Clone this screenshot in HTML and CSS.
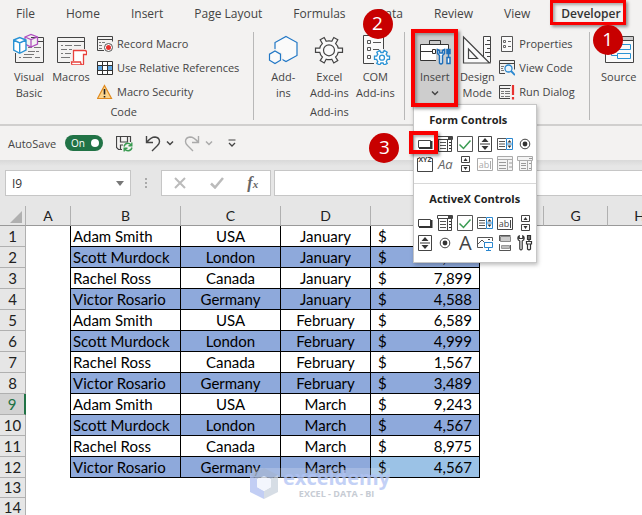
FILE: index.html
```
<!DOCTYPE html>
<html lang="en">
<head>
    <meta charset="UTF-8">
    <meta name="viewport" content="width=device-width, initial-scale=1.0">
    <title>Spreadsheet - Developer tab</title>
    <link rel="stylesheet" href="styles.css">
</head>
<body>
    <!-- icons used in both control lists -->
    <svg class="sprite" aria-hidden="true">
        <symbol id="i-button" viewBox="0 0 16 16"><path d="M1.5 4.5h12v7h-12z" fill="#fff" stroke="#444"/><path d="M2 12h12.500V5" fill="none" stroke="#333" stroke-width="2"/></symbol>
        <symbol id="i-combo" viewBox="0 0 16 16"><path d="M.5 .5h15v3H.5zM1.500 3.500v12h13v-12M10.500 4v11" fill="#fff" stroke="#444"/><path d="M11 1h4v2h-4z" fill="#444"/><path d="M3 6.500h6M3 9.500h6M3 12.500h6" stroke="#555"/><path d="M12 6h2v1h-2zM12 9h2v1h-2zM12 12h2v1h-2z" fill="#333"/></symbol>
        <symbol id="i-check" viewBox="0 0 16 16"><path d="M.5 .5h15v15H.5z" fill="#fff" stroke="#555"/><path d="M2.500 8.500l4 4 7-8" fill="none" stroke="#3a9b52" stroke-width="1.500"/></symbol>
        <symbol id="i-spin" viewBox="0 0 16 16"><path d="M1.500 .5h13v15h-13z" fill="#fff" stroke="#444"/><path d="M3 8h10" stroke="#333"/><path d="M8 2l3.500 4h-7zM8 14l3.500-4h-7z" fill="#333"/></symbol>
        <symbol id="i-list" viewBox="0 0 16 16"><path d="M9 2.500H.5v11H9" fill="#fff" stroke="#555"/><path d="M2 5.500h6M2 8h6M2 10.500h6" stroke="#555"/><path d="M9.500 2.500h6v11h-6zM9.500 8h6" fill="#fff" stroke="#2a87cf"/><path d="M12.500 4l2 2.500h-4zM12.500 12l2-2.500h-4z" fill="#333"/></symbol>
        <symbol id="i-radio" viewBox="0 0 16 16"><circle cx="8" cy="8" r="4.800" fill="#fff" stroke="#444"/><circle cx="8" cy="8" r="2.400" fill="#333"/></symbol>
        <symbol id="i-scroll" viewBox="0 0 16 16"><path d="M4.500 .5h8v6h-8zM4.500 9.500h8v6h-8z" fill="#fff" stroke="#444"/><path d="M8.500 2l2 3h-4zM8.500 14l2-3h-4z" fill="#333"/></symbol>
        <symbol id="i-listbox" viewBox="0 0 16 16"><path d="M.5 .5h15v14H.5zM.5 3.500h15M10.500 4v10" fill="#f4f4f4" stroke="#aaa"/><path d="M2 6.500h7M2 9.500h7M2 12.500h7M12 7h3M12 11h3" stroke="#999"/></symbol>
        <symbol id="i-dropbox" viewBox="0 0 16 16"><path d="M.5 .5h15v4H.5zM2.500 4.500v10h12v-10M10.500 5v10" fill="#f4f4f4" stroke="#aaa"/><path d="M4 7.500h5M4 9.500h5M4 12.500h5M12 7.500h2M12 12.500h2M12 2.500h3" stroke="#999"/></symbol>
        <symbol id="i-image" viewBox="0 0 16 16"><path d="M6 12.500H.5v-10h15V6" fill="none" stroke="#555"/><path d="M1 9l4-4 3 3" fill="none" stroke="#555"/><path d="M11 4h2v1h-2z" fill="#444"/><path d="M7.500 7.500h8v5h-8zM11.500 13v2M9 15.500h5" fill="#fff" stroke="#2a87cf"/></symbol>
        <symbol id="i-toggle" viewBox="0 0 16 16"><path d="M3.500 1.500h10v5h-10z" fill="#ccc" stroke="#888"/><path d="M2.500 6V.5h11M2.500 9v6.500h11V10" fill="none" stroke="#555"/><path d="M4.500 10.500h8v3h-8z" fill="#bbb" stroke="#999"/></symbol>
        <symbol id="i-tools" viewBox="0 0 16 16"><path d="M2.200 .8Q.8 1.500 .8 3.200q0 1.800 2 2.800v8q1.200 1.800 2.400 0V6q2-1 2-2.800 0-1.700-1.400-2.400v2.700H2.200zM12 .5v6M10.500 .5h3v4h-3zM9.500 6.500h5v2.500h-5zM10.500 9v5q1.500 1.800 3 0V9z" fill="#fff" stroke="#333" stroke-width="1.200"/></symbol>
        <symbol id="i-chevron" viewBox="0 0 8 8"><path d="M1 2.500l3 3 3-3" fill="none" stroke="currentColor" stroke-width="1.500"/></symbol>
    </svg>

    <div class="app">
        <nav class="tabs">
            <a href="#">File</a>
            <a href="#">Home</a>
            <a href="#">Insert</a>
            <a href="#">Page Layout</a>
            <a href="#">Formulas</a>
            <a href="#" class="marked">Data<span class="step step-2">2</span></a>
            <a href="#">Review</a>
            <a href="#">View</a>
            <a href="#" class="marked active">Developer<span class="frame frame-tab"></span><span class="step step-1">1</span></a>
        </nav>

        <section class="ribbon">
            <div class="group">
                <div class="tools">
                    <button class="big">
                        <svg width="32" height="32" viewBox="0 0 32 32" fill="none"><path d="M18 4.500h12.500v25H2.500V20" stroke="#444"/><path d="M24 8.500h6" stroke="#444"/><path d="M15 14.500h4M21 14.500h7M15 18.500h7M23 18.500h3M6 24.500h2M10 24.500h9M22 24.500h5M11 21.500h10" stroke="#777"/><path d="M12 4l6-2.500L24.500 4v7l-6.500 3-6-3zM12 4l6 2.500L24.500 4M18 6.500V14" stroke="#b04fc0" stroke-width="1.300"/><path d="M.7 7l6-2.500L13 7v10l-6.300 3.300L.7 17z" fill="#fff"/><path d="M.7 7l6-2.500L13 7v10l-6.300 3.300L.7 17zM.7 7l6 3L13 7M6.700 10v10" stroke="#2a93d5" stroke-width="1.400"/></svg>
                        <span>Visual<br>Basic</span>
                    </button>
                    <button class="big">
                        <svg width="32" height="32" viewBox="0 0 32 32" fill="none"><path d="M15 29.500H2.500v-25h27V16M2.500 8.500h27" stroke="#444"/><path d="M6 12.500h2M10 12.500h7M19 12.500h7M6 16.500h6M14 16.500h3M6 20.500h2M10 20.500h6M6 24.500h9" stroke="#777"/><path d="M18.500 28V17.500h11.500q2 0 1.500 4h-3V31q0 1-2 1H17.500q-1 0-1-3h9q0 2 1.500 2.500" fill="#fff" stroke="#e8413c" stroke-width="1.300"/></svg>
                        <span>Macros</span>
                    </button>
                    <div class="stack">
                        <button class="small"><svg width="16" height="16" viewBox="0 0 16 16" fill="none"><path d="M7 14.500H.5V.5h15v5M.5 3.500h15" stroke="#444"/><path d="M2 6.500h2M5 6.500h3M2 9.500h3M2 12.500h3" stroke="#777"/><circle cx="11.500" cy="11.500" r="4" fill="#fff" stroke="#555"/><circle cx="11.500" cy="11.500" r="2.500" fill="#e8322f"/></svg>Record Macro</button>
                        <button class="small"><svg width="16" height="16" viewBox="0 0 16 16" fill="none"><path d="M.5 1.500h15v13H.5z" fill="#fff"/><path d="M1 5h4v5H1zM11 5h4v5h-4z" fill="#62a9e4"/><path d="M.5 1.500h15v13H.5zM5.500 1v13M10.500 1v13M.5 5.500h15M.5 10.500h15" stroke="#333"/></svg>Use Relative References</button>
                        <button class="small"><svg width="16" height="16" viewBox="0 0 16 16"><path d="M7.500 1.500l7 13H.5z" fill="#fbd48a" stroke="#e08a1e" stroke-width="1.200"/><path d="M7.500 5v5.500M7.500 12v1.500" stroke="#222" stroke-width="1.600"/></svg>Macro Security</button>
                    </div>
                </div>
                <div class="group-name">Code</div>
            </div>

            <div class="group addins">
                <div class="tools">
                    <button class="big">
                        <svg width="32" height="32" viewBox="0 0 32 32" fill="none"><path d="M19 3.500l11 6v13l-11 6-11-6v-13z" fill="#fafafa" stroke="#2177c5" stroke-width="1.200"/><path d="M8 17.500l6 3.500v6.500l-6 3.500-6-3.500V21z" fill="#fafafa" stroke="#f3f2f1" stroke-width="3"/><path d="M8 18l5.500 3.200v6L8 30.500l-5.500-3.300v-6z" fill="#fafafa" stroke="#2177c5" stroke-width="1.200"/></svg>
                        <span>Add-<br>ins</span>
                    </button>
                    <button class="big">
                        <svg width="32" height="32" viewBox="0 0 32 32" fill="none" stroke="#444" stroke-width="1.200"><path d="M11.200 4.500l2 3.800q2.800-1 5.600 0l2-3.800 4 2.300-2.200 3.800q2.200 2 2.600 4.600h4.300v4.200h-4.300q-.4 2.600-2.600 4.600l2.200 3.600-4 2.400-2-3.800q-2.800 1-5.600 0l-2 3.800-4-2.400L9.400 24q-2.200-2-2.600-4.600H2.500v-4.200h4.300q.4-2.600 2.600-4.600L7.200 6.800z" fill="#fafafa"/><circle cx="16" cy="17.300" r="5.500"/></svg>
                        <span>Excel<br>Add-ins</span>
                    </button>
                    <button class="big">
                        <svg width="32" height="32" viewBox="0 0 32 32" fill="none"><path d="M15 30.500H4.500v-28h20V16" fill="#fafafa" stroke="#444"/><path d="M8.500 7.500h3v3h-3zM8.500 14.500h3v3h-3zM8.500 22.500h3v3h-3zM14 9.500h8M14 16.500h6" stroke="#555"/><g stroke="#2a93d5" stroke-width="1.300"><path d="M20.800 17.500l1.100 2h2.200l1.100-2 3 1.700-1 2q.8.9 1.100 2h2.200v3.200h-2.200q-.3 1.100-1.100 2l1 2-3 1.600-1.100-2h-2.200l-1.100 2-3-1.600 1-2q-.8-.9-1.100-2h-2.200v-3.200h2.200q.3-1.100 1.100-2l-1-2z" fill="#fff"/><circle cx="23" cy="24.700" r="2.500"/></g></svg>
                        <span>COM<br>Add-ins</span>
                    </button>
                </div>
                <div class="group-name">Add-ins</div>
            </div>

            <div class="group controls">
                <div class="tools">
                    <div class="dropdown">
                        <button class="big open">
                            <svg width="32" height="32" viewBox="0 0 32 32" fill="none"><path d="M10.500 11V7.500h11V11" stroke="#333"/><path d="M1.500 11.500h28v16h-28z" fill="#fff" stroke="#333"/><path d="M1.500 18.500h28" stroke="#333"/><path d="M13.500 16.500h3v4h-3z" fill="#fff" stroke="#333"/><path d="M17 16h15v17H17z" fill="#cdcdcd"/><path d="M18.500 16.500v4l2 2V30q1.500 2 3 0v-7.500l2-2v-4l-2 1V20h-3v-2.500zM29.500 16v8M28 24.500h3v6h-3zM28 16.500h3v4h-3z" fill="#fff" stroke="#1e6fba" stroke-width="1.500"/></svg>
                            <span>Insert</span>
                            <svg class="chevron" width="8" height="8"><use href="#i-chevron"/></svg>
                        </button>
                        <div class="menu">
                            <section>
                                <h2>Form Controls</h2>
                                <div class="menu-grid">
                                    <button class="marked" aria-label="Button"><svg><use href="#i-button"/></svg><span class="frame frame-item"></span><span class="step step-3">3</span></button>
                                    <button aria-label="Combo Box"><svg><use href="#i-combo"/></svg></button>
                                    <button aria-label="Check Box"><svg><use href="#i-check"/></svg></button>
                                    <button aria-label="Spin Button"><svg><use href="#i-spin"/></svg></button>
                                    <button aria-label="List Box"><svg><use href="#i-list"/></svg></button>
                                    <button aria-label="Option Button"><svg><use href="#i-radio"/></svg></button>
                                    <button aria-label="Group Box"><svg viewBox="0 0 16 16"><path d="M2 2.500H.5v13h15v-13H14" fill="none" stroke="#444"/><text x="8" y="6" class="icon-xyz">XYZ</text></svg></button>
                                    <button class="label">Aa</button>
                                    <button aria-label="Scroll Bar"><svg><use href="#i-scroll"/></svg></button>
                                    <button class="off" aria-label="Text Field"><svg viewBox="0 0 16 16"><path d="M.5 2.500h15v12H.5z" fill="#fff" stroke="currentColor"/><text x="7" y="12" class="icon-ab">ab</text><path d="M13.500 5v8" stroke="currentColor"/></svg></button>
                                    <button class="off" aria-label="Combo List"><svg><use href="#i-listbox"/></svg></button>
                                    <button class="off" aria-label="Combo Drop-Down"><svg><use href="#i-dropbox"/></svg></button>
                                </div>
                            </section>
                            <section>
                                <h2>ActiveX Controls</h2>
                                <div class="menu-grid">
                                    <button aria-label="Command Button"><svg><use href="#i-button"/></svg></button>
                                    <button aria-label="Combo Box"><svg><use href="#i-combo"/></svg></button>
                                    <button aria-label="Check Box"><svg><use href="#i-check"/></svg></button>
                                    <button aria-label="List Box"><svg><use href="#i-list"/></svg></button>
                                    <button aria-label="Text Box"><svg viewBox="0 0 16 16"><path d="M.5 2.500h15v12H.5z" fill="#fff" stroke="currentColor"/><text x="7" y="12" class="icon-ab">ab</text><path d="M13.500 5v8" stroke="currentColor"/></svg></button>
                                    <button aria-label="Scroll Bar"><svg><use href="#i-scroll"/></svg></button>
                                    <button aria-label="Spin Button"><svg><use href="#i-spin"/></svg></button>
                                    <button aria-label="Option Button"><svg><use href="#i-radio"/></svg></button>
                                    <button class="letter">A</button>
                                    <button aria-label="Image"><svg><use href="#i-image"/></svg></button>
                                    <button aria-label="Toggle Button"><svg><use href="#i-toggle"/></svg></button>
                                    <button aria-label="More Controls"><svg><use href="#i-tools"/></svg></button>
                                </div>
                            </section>
                        </div>
                        <span class="frame frame-insert"></span>
                    </div>
                    <button class="big">
                        <svg width="32" height="32" viewBox="0 0 32 32" fill="none"><path d="M22.500 3.500h7v26h-7z" fill="#fafafa" stroke="#444"/><path d="M26 7.500h3M24 11.500h5M26 15.500h3M24 19.500h5M26 23.500h3" stroke="#444"/><path d="M2.500 4v26h26z" fill="#fafafa" stroke="#444" stroke-width="1.200"/><path d="M7.500 16v9.500h9z" stroke="#444" stroke-width="1.200"/></svg>
                        <span>Design<br>Mode</span>
                    </button>
                    <div class="stack">
                        <button class="small"><svg width="16" height="16" viewBox="0 0 16 16" fill="none"><path d="M2.500 .5h11v15h-11z" fill="#fafafa" stroke="#555"/><path d="M4.500 4.500h2v2h-2zM4.500 9.500h2v2h-2zM9 5.500h3M9 10.500h3" stroke="#666"/></svg>Properties</button>
                        <button class="small"><svg width="16" height="16" viewBox="0 0 16 16" fill="none"><path d="M6 13.500H.5V.5h15v9M.5 3.500h15" stroke="#444"/><path d="M2 6.500h3M2 8.500h2M2 10.500h3" stroke="#777"/><circle cx="9.500" cy="8.500" r="3.500" fill="#e9f4fc" stroke="#2a87cf" stroke-width="1.300"/><path d="M12 11l4 4" stroke="#2a87cf" stroke-width="1.800"/></svg>View Code</button>
                        <button class="small"><svg width="16" height="16" viewBox="0 0 16 16" fill="none"><path d="M11 14.500H.5V1.500H12M.5 4.500H11" stroke="#444"/><path d="M2 7.500h3M6 7.500h5M2 9.500h3M6 9.500h5M2 12.500h3M6 12.500h5" stroke="#777"/><path d="M14 1v10M14 13v2.500" stroke="#e8322f" stroke-width="2.200"/></svg>Run Dialog</button>
                    </div>
                </div>
            </div>

            <div class="group">
                <div class="tools">
                    <button class="big">
                        <svg width="32" height="32" viewBox="0 0 32 32" fill="none"><path d="M2.500 3.500h28v26h-28z" fill="#fafafa" stroke="#444"/><path d="M3 4h27v3H3z" fill="#ccc"/><path d="M2.500 7.500h28" stroke="#444"/><path d="M14.500 11.500h13v5h-13zM14.500 20.500h13v5h-13zM5 13.500h9M8.500 13.500v9h6" stroke="#2a93d5"/></svg>
                        <span>Source</span>
                    </button>
                </div>
            </div>
        </section>

        <div class="quick">
            <label for="autosave">AutoSave</label>
            <span class="toggle"><input type="checkbox" id="autosave" checked><span>On</span></span>
            <button class="save" aria-label="Save"><svg width="17" height="17" viewBox="0 0 17 17" fill="none"><path d="M6 14.500H2.500l-2-2V1.500h14V7M4.500 2v5h7V2M4.500 14v-4H7" stroke="#444" stroke-width="1.200"/><path d="M8 11.500q1-3.500 4-3.300 2 0 3.500 2.300M15.800 7.500v3.300h-3.300M16 12.500q-1 3.500-4 3.300-2 0-3.500-2.300M8.200 16.500v-3.300h3.300" stroke="#3a9b52" stroke-width="1.400"/></svg></button>
            <button class="undo" aria-label="Undo"><svg width="16" height="17" viewBox="0 0 16 17" fill="none"><path d="M1.500 1v6.500H8M1.500 7.500Q6 2 10 2q4.500 .5 4.500 4.500 0 2-2 4L7 16" stroke="#444" stroke-width="1.400"/></svg><svg class="chevron" width="8" height="8"><use href="#i-chevron"/></svg></button>
            <button class="redo" aria-label="Redo"><svg width="16" height="17" viewBox="0 0 16 17" fill="none"><path d="M14.500 1v6.500H8M14.500 7.500Q10 2 6 2 1.500 2.500 1.500 6.500q0 2 2 4L9 16" stroke="#aaa" stroke-width="1.400"/></svg><svg class="chevron" width="8" height="8"><use href="#i-chevron"/></svg></button>
            <button aria-label="Customize"><svg width="8" height="8" viewBox="0 0 8 8"><path d="M.5 1h7" stroke="#444"/><path d="M1 4l3 3 3-3" fill="none" stroke="#444" stroke-width="1.300"/></svg></button>
        </div>

        <div class="formula-bar">
            <div class="name-box"><input type="text" value="I9" aria-label="Name box"><svg width="8" height="5" viewBox="0 0 8 5"><path d="M0 0h8L4 5z" fill="#777"/></svg></div>
            <svg class="dots" width="2" height="12" viewBox="0 0 2 12"><path d="M0 1h2v2H0zM0 5h2v2H0zM0 9h2v2H0z" fill="#aaa"/></svg>
            <div class="formula-buttons">
                <button aria-label="Cancel"><svg width="12" height="12" viewBox="0 0 12 12"><path d="M1 1l10 10M11 1L1 11" stroke="#bbb" stroke-width="2"/></svg></button>
                <button aria-label="Enter"><svg width="14" height="12" viewBox="0 0 14 12"><path d="M1 6.500l4 4L13 1" fill="none" stroke="#bbb" stroke-width="2.500"/></svg></button>
                <button class="fx">f<small>x</small></button>
            </div>
            <input type="text" class="formula" aria-label="Formula">
        </div>

        <main class="sheet">
            <table>
                <colgroup><col class="c-num"><col class="c-a"><col class="c-b"><col class="c-c"><col class="c-d"><col class="c-e"><col class="c-f"><col class="c-f"><col class="c-f"></colgroup>
                <thead>
                    <tr><th><svg width="12" height="12" viewBox="0 0 12 12"><path d="M12 0v12H0z" fill="#b0b0b0"/></svg></th><th>A</th><th>B</th><th>C</th><th>D</th><th>E</th><th>F</th><th>G</th><th>H</th></tr>
                </thead>
                <tbody class="data">
                    <tr><th>1</th><td></td><td>Adam Smith</td><td>USA</td><td>January</td><td><div>$ <span>5,436</span></div></td></tr>
                    <tr><th>2</th><td></td><td>Scott Murdock</td><td>London</td><td>January</td><td><div>$ <span>6,754</span></div></td></tr>
                    <tr><th>3</th><td></td><td>Rachel Ross</td><td>Canada</td><td>January</td><td><div>$ <span>7,899</span></div></td></tr>
                    <tr><th>4</th><td></td><td>Victor Rosario</td><td>Germany</td><td>January</td><td><div>$ <span>4,588</span></div></td></tr>
                    <tr><th>5</th><td></td><td>Adam Smith</td><td>USA</td><td>February</td><td><div>$ <span>6,589</span></div></td></tr>
                    <tr><th>6</th><td></td><td>Scott Murdock</td><td>London</td><td>February</td><td><div>$ <span>4,999</span></div></td></tr>
                    <tr><th>7</th><td></td><td>Rachel Ross</td><td>Canada</td><td>February</td><td><div>$ <span>1,567</span></div></td></tr>
                    <tr><th>8</th><td></td><td>Victor Rosario</td><td>Germany</td><td>February</td><td><div>$ <span>3,489</span></div></td></tr>
                    <tr class="current"><th>9</th><td></td><td>Adam Smith</td><td>USA</td><td>March</td><td><div>$ <span>9,243</span></div></td></tr>
                    <tr><th>10</th><td></td><td>Scott Murdock</td><td>London</td><td>March</td><td><div>$ <span>4,567</span></div></td></tr>
                    <tr><th>11</th><td></td><td>Rachel Ross</td><td>Canada</td><td>March</td><td><div>$ <span>8,975</span></div></td></tr>
                    <tr><th>12</th><td></td><td>Victor Rosario</td><td>Germany</td><td>March</td><td class="light"><div>$ <span>4,567</span></div></td></tr>
                </tbody>
                <tbody>
                    <tr><th>13</th></tr>
                    <tr><th>14</th></tr>
                </tbody>
            </table>

            <div class="watermark">
                <svg width="28" height="31" viewBox="0 0 28 31"><path d="M14 0l14 7-7 4-7-3-7 3-7-4z" fill="#a9b9d6"/><path d="M0 7l7 4v8l7 4v8L0 24z" fill="#b3c3f2"/><path d="M28 7l-7 4v8l-7 4v8l14-7z" fill="#cdd5df"/><path d="M14 8l7 3v8l-7 4-7-4v-8z" fill="#f1f5fd"/></svg>
                <div><strong>exceldemy</strong><small>EXCEL - DATA - BI</small></div>
            </div>
        </main>
    </div>
</body>
</html>
```
FILE: styles.css
```
* {
    box-sizing: border-box;
}
body {
    margin: 0;
    font-family: "Open Sans", "Noto Sans", sans-serif;
    font-size: 11px;
    color: #444;
    background: #fff;
}
button {
    font: inherit;
    color: inherit;
    background: none;
    border: none;
    padding: 0;
}
svg {
    display: block;
    flex: none;
}
.sprite {
    position: absolute;
    width: 0;
    height: 0;
}
.app {
    display: flex;
    flex-direction: column;
    height: 100vh;
    overflow: hidden;
}

/* tabs */
.tabs {
    display: flex;
    gap: 31px;
    height: 28px;
    padding-left: 16px;
    background: #f3f2f1;
    font-size: 12px;
    line-height: 27px;
    white-space: nowrap;
}
.tabs a {
    color: #444;
    text-decoration: none;
}
.tabs .active {
    color: #333;
    font-weight: 600;
}
.marked {
    position: relative;
}

/* numbered steps and red frames */
.step {
    position: absolute;
    z-index: 5;
    width: 30px;
    height: 30px;
    border-radius: 50%;
    background: #c80000;
    color: #fff;
    font-size: 19px;
    font-weight: normal;
    line-height: 29px;
    text-align: center;
}
.step-1 {
    top: 25px;
    right: -2px;
}
.step-2 {
    top: 9px;
    left: -14px;
}
.step-3 {
    top: -1px;
    left: -46px;
}
.frame {
    position: absolute;
    z-index: 4;
    border: 4px solid #f90000;
    box-shadow: 2px 2px 3px rgba(0, 0, 0, 0.4), inset 2px 2px 3px rgba(0, 0, 0, 0.3);
}
.frame-tab {
    top: 0;
    bottom: 3px;
    left: -11px;
    right: -5px;
    border-width: 3px;
}
.frame-insert {
    top: -3px;
    left: -2px;
    right: -2px;
    height: 78px;
}
.frame-item {
    top: -3px;
    left: -6px;
    width: 29px;
    height: 23px;
}

/* ribbon */
.ribbon {
    display: flex;
    height: 98px;
    padding-top: 4px;
    background: #f3f2f1;
    border-bottom: 2px solid #d0cfce;
    font-size: 11px;
    line-height: 16px;
    white-space: nowrap;
}
.group {
    display: flex;
    flex-direction: column;
    justify-content: space-between;
    height: 88px;
    padding: 0 14px 0 8px;
    border-right: 1px solid #b8b8b8;
}
.group:last-child {
    border: none;
}
.tools {
    display: flex;
}
.group-name {
    height: 13px;
    text-align: center;
    line-height: 10px;
}
.big {
    display: flex;
    flex-direction: column;
    align-items: center;
    width: 42px;
    padding-top: 1px;
}
.big span {
    margin-top: 4px;
}
.stack {
    display: flex;
    flex-direction: column;
    padding-left: 5px;
}
.small {
    display: flex;
    align-items: center;
    gap: 4px;
    height: 24px;
}
.addins {
    padding-right: 8px;
}
.addins .tools {
    gap: 4px;
}
.controls .stack {
    padding-left: 1px;
}
.dropdown {
    position: relative;
}
.open {
    width: 43px;
    height: 72px;
    background: #cdcdcd;
}
.open .chevron {
    margin-top: 4px;
}

/* insert menu */
.menu {
    position: absolute;
    z-index: 3;
    top: 72px;
    left: 0;
    background: #fff;
    border: 1px solid #c6c6c6;
    box-shadow: 1px 2px 4px rgba(0, 0, 0, 0.25);
}
.menu section {
    padding: 7px 1px 9px;
}
.menu section + section {
    border-top: 1px solid #d8d8d8;
}
.menu h2 {
    margin: 0 0 6px;
    padding-left: 14px;
    font-size: 11px;
    line-height: 16px;
    color: #222;
}
.menu-grid {
    display: grid;
    grid-template-columns: repeat(6, 20px);
    grid-auto-rows: 20px;
}
.menu-grid button {
    display: flex;
    align-items: center;
    justify-content: center;
}
.menu-grid svg {
    width: 16px;
    height: 16px;
}
.menu-grid .off {
    color: #aaa;
}
.menu-grid .letter {
    font-size: 20px;
    line-height: 20px;
}
.menu-grid .label {
    font-size: 13px;
    font-style: italic;
    color: #666;
}
.icon-xyz {
    font-size: 7px;
    font-weight: bold;
    text-anchor: middle;
    fill: #444;
}
.icon-ab {
    font-size: 9px;
    text-anchor: middle;
    fill: currentColor;
}

/* quick access bar */
.quick {
    display: flex;
    align-items: center;
    height: 34px;
    padding-left: 8px;
    background: #f3f2f1;
}
.quick label {
    width: 57px;
}
.toggle {
    position: relative;
    width: 38px;
    height: 16px;
    margin-right: 13px;
    border-radius: 8px;
    background: #217346;
    color: #fff;
    font-size: 10px;
    line-height: 16px;
    padding-left: 6px;
}
.toggle input {
    position: absolute;
    inset: 0;
    margin: 0;
    opacity: 0;
}
.toggle::after {
    content: "";
    position: absolute;
    top: 4px;
    right: 4px;
    width: 8px;
    height: 8px;
    border-radius: 50%;
    background: #fff;
}
.save {
    margin-right: 12px;
}
.undo,
.redo {
    display: flex;
    align-items: center;
    gap: 5px;
    margin-right: 10px;
}
.redo {
    margin-right: 15px;
    color: #aaa;
}

/* formula bar */
.formula-bar {
    display: flex;
    align-items: center;
    height: 46px;
    padding: 0 0 0 5px;
    background: linear-gradient(#d9d9d9, #e6e6e6 6px);
}
.name-box,
.formula-buttons,
.formula {
    height: 26px;
    background: #fff;
    border: 1px solid #c6c6c6;
}
.name-box {
    display: flex;
    align-items: center;
    width: 126px;
    padding: 0 6px;
}
.name-box input {
    flex: 1;
    min-width: 0;
    padding: 0;
    border: none;
    font-family: "Open Sans", sans-serif;
    font-size: 12px;
    color: #333;
}
.dots {
    margin: 0 14px;
}
.formula-buttons {
    display: flex;
    align-items: center;
    justify-content: space-around;
    width: 110px;
}
.formula-buttons .fx {
    font-family: "Liberation Serif", serif;
    font-size: 16px;
    font-style: italic;
    font-weight: bold;
    line-height: 20px;
    color: #666;
}
.fx small {
    font-size: 11px;
}
.formula {
    flex: 1;
    min-width: 0;
    margin-left: 3px;
    border-right: none;
}

/* sheet */
.sheet {
    position: relative;
    flex: 1;
    overflow: hidden;
    font-family: Lato, "Liberation Sans", sans-serif;
    font-size: 15px;
    color: #000;
}
table {
    width: 672px;
    table-layout: fixed;
    border-collapse: separate;
    border-spacing: 0;
    line-height: 20px;
}
.c-num { width: 26px; }
.c-a { width: 45px; }
.c-b { width: 110px; }
.c-c { width: 100px; }
.c-d { width: 90px; }
.c-e { width: 109px; }
.c-f { width: 64px; }
th,
td {
    height: 20px;
    padding: 0;
    font-weight: normal;
    text-align: center;
    white-space: nowrap;
}
th {
    background: #e6e6e6;
    border-right: 1px solid #b0b0b0;
    border-bottom: 1px solid #b0b0b0;
    color: #222;
}
thead th {
    font-size: 14px;
    line-height: 19px;
    border-bottom-color: #999;
}
thead svg {
    margin: 2px 0 0 10px;
}
tbody th {
    line-height: 19px;
}
.data th,
.data td {
    height: 21px;
}
.data td {
    border-right: 1px solid #000;
}
.data td:nth-child(n+3) {
    border-bottom: 1px solid #000;
}
.data td:nth-child(3) {
    padding-left: 2px;
    text-align: left;
}
.data tr:nth-child(even) td:nth-child(n+3) {
    background: #8ea9db;
}
.data tr:nth-child(even) td.light {
    background: #9bc2e6;
}
.data div {
    display: flex;
    justify-content: space-between;
    padding: 0 7px;
}
.current th {
    background: #d2d2d2;
    color: #217346;
    border-right: 2px solid #217346;
}

.watermark {
    position: absolute;
    top: 262px;
    left: 250px;
    display: flex;
    gap: 5px;
    background: rgba(255, 255, 255, 0.25);
    font-family: "Open Sans", sans-serif;
    opacity: 0.8;
}
.watermark strong {
    display: block;
    font-size: 20px;
    line-height: 20px;
    color: #b5c6f5;
}
.watermark small {
    display: block;
    font-size: 9px;
    font-weight: bold;
    line-height: 11px;
    text-align: center;
    color: #b9c0ca;
}
```
